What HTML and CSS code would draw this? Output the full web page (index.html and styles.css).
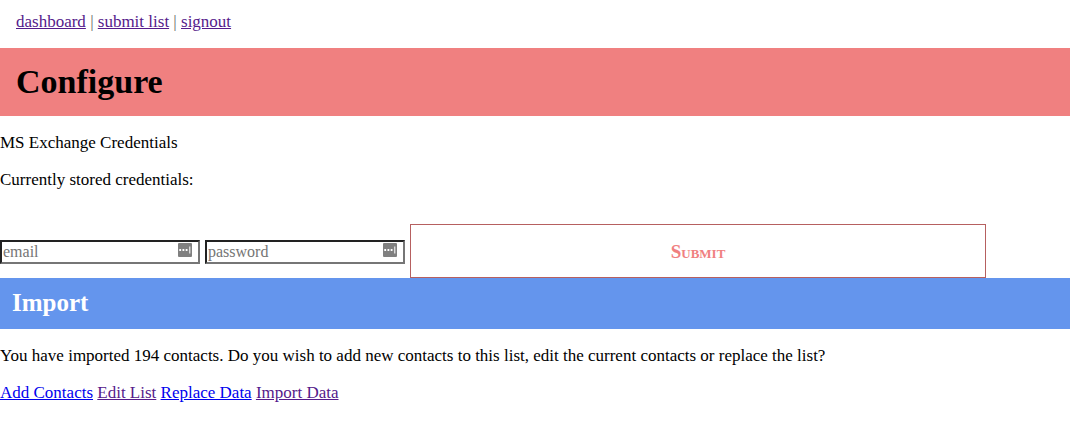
FILE: index.html
```html
<!DOCTYPE html>
<html lang="en">
<head>
<meta charset="utf-8">
<title>Configure</title>
<link rel="stylesheet" href="styles.css">
</head>
<body>
<nav class="nav">
  <a class="seen" href="#dashboard">dashboard</a> | <a class="seen" href="#submit">submit list</a> | <a class="seen" href="#signout">signout</a>
</nav>
<main>
  <h1 class="banner">Configure</h1>
  <p class="text">MS Exchange Credentials</p>
  <p class="text">Currently stored credentials:</p>
  <form class="credentials">
    <div class="field">
      <input class="input" type="email" placeholder="email" aria-label="email">
      <svg class="key" viewBox="0 0 14 14" aria-hidden="true"><rect width="14" height="14" rx="1" fill="#808080"/><path d="M1.3 6h1.8v2H1.3zM4.5 6h1.8v2H4.5zM7.7 6h1.8v2H7.7zM11.3 3.5h1v7h-1z" fill="#fff"/></svg>
    </div>
    <div class="field">
      <input class="input" type="password" placeholder="password" aria-label="password">
      <svg class="key" viewBox="0 0 14 14" aria-hidden="true"><rect width="14" height="14" rx="1" fill="#808080"/><path d="M1.3 6h1.8v2H1.3zM4.5 6h1.8v2H4.5zM7.7 6h1.8v2H7.7zM11.3 3.5h1v7h-1z" fill="#fff"/></svg>
    </div>
    <button class="submit" type="submit">Submit</button>
  </form>
  <h2 class="subbanner">Import</h2>
  <p class="text">You have imported 194 contacts. Do you wish to add new contacts to this list, edit the current contacts or replace the list?</p>
  <p class="text"><a class="fresh" href="#add">Add Contacts</a> <a class="seen" href="#edit">Edit List</a> <a class="fresh" href="#replace">Replace Data</a> <a class="seen" href="#import">Import Data</a></p>
</main>
</body>
</html>
```

FILE: styles.css
```css
* {
  box-sizing: border-box;
}

body {
  margin: 0;
  background: #fff;
  color: #000;
  font: 17px/20px "Liberation Serif", "Times New Roman", serif;
}

.nav {
  padding: 12px 16px 16px;
  color: #666;
}

.seen {
  color: #551a8b;
}

.fresh {
  color: #0000ee;
}

.banner {
  margin: 0;
  padding: 14px 16px;
  background: #f08080;
  font-size: 34px;
  line-height: 40px;
}

.text {
  margin: 17px 0;
}

.credentials {
  display: flex;
  align-items: center;
  gap: 5px;
  margin-top: 34px;
  padding-right: 84px;
}

.field {
  position: relative;
  flex: 0 0 200px;
  padding-top: 2px;
}

.input {
  display: block;
  width: 100%;
  height: 24px;
  padding: 1px;
  border: 2px solid;
  border-color: #222 #767676 #767676 #222;
  background: #fff;
  font: inherit;
  font-size: 16px;
}

.input::placeholder {
  color: #757575;
}

.key {
  position: absolute;
  top: 5px;
  right: 8px;
  width: 14px;
  height: 14px;
}

.submit {
  flex: 1;
  height: 54px;
  padding: 2px 0 0;
  border: 1px solid #b66060;
  background: #fff;
  color: #f08080;
  font: inherit;
  font-size: 19px;
  font-weight: bold;
  font-variant: small-caps;
}

.subbanner {
  margin: 0;
  padding: 10px 12px 11px;
  background: #6495ed;
  color: #fff;
  font-size: 25px;
  line-height: 30px;
}
```
